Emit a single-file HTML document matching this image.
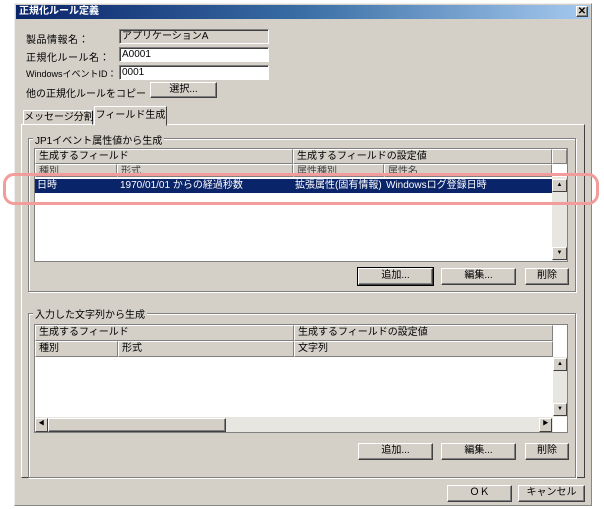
<!DOCTYPE html>
<html><head><meta charset="utf-8"><style>
*{box-sizing:border-box;margin:0;padding:0}
body{width:604px;height:509px;background:#fff;position:relative;overflow:hidden;font-family:"Liberation Sans","Noto Sans CJK JP",sans-serif;font-size:10px;color:#000;white-space:nowrap}
.a{position:absolute}
.dlg{left:14px;top:3px;width:578px;height:503px;background:#d4d0c8;border:1px solid #888;border-top-color:#eee;border-left-color:#eee}
.title{left:16px;top:5px;width:574px;height:14px;background:linear-gradient(90deg,#0a246a,#3a6ea5 50%,#a6caf0);color:#fff;font-weight:bold;padding-left:3px;line-height:14px;font-size:10px}
.in{background:#fff;border:1px solid;border-color:#808080 #fff #fff #808080;box-shadow:inset 1px 1px 0 #404040;padding-left:2px;line-height:13px;font-size:10px}
.btn{background:#d4d0c8;border:1px solid;border-color:#fff #404040 #404040 #fff;box-shadow:inset -1px -1px 0 #808080;text-align:center;font-size:10px;line-height:14px}
.grp{border:1px solid #808080;box-shadow:1px 1px 0 #fff,inset 1px 1px 0 #fff}
.gl{background:#d4d0c8;padding:0 2px;font-size:10px}
.hd{background:#d4d0c8;border:1px solid;border-color:#fff #808080 #808080 #fff;padding-left:3px;font-size:10px;line-height:13px;overflow:hidden;white-space:nowrap}
.sb{background:#e8e6e0}
.arr{background:#d4d0c8;border:1px solid;border-color:#fff #404040 #404040 #fff;font-size:6px;text-align:center;line-height:11px}
.lb{font-size:10px;letter-spacing:0.5px}
</style></head><body>
<div class="a dlg"></div>
<div class="a title">正規化ルール定義</div>
<div class="a btn" style="left:576px;top:6px;width:12px;height:11px;font-size:10px;line-height:9px;font-weight:bold">✕</div>

<div class="a lb" style="left:26px;top:31px">製品情報名：</div>
<div class="a lb" style="left:26px;top:49px">正規化ルール名：</div>
<div class="a" style="left:26px;top:67px;font-size:9px">WindowsイベントID：</div>
<div class="a" style="left:26px;top:85px;font-size:10px">他の正規化ルールをコピー：</div>
<div class="a in" style="left:119px;top:29px;width:150px;height:15px;background:#d4d0c8">アプリケーションA</div>
<div class="a in" style="left:119px;top:47px;width:150px;height:15px">A0001</div>
<div class="a in" style="left:119px;top:65px;width:150px;height:15px">0001</div>
<div class="a btn" style="left:150px;top:82px;width:67px;height:16px">選択...</div>

<div class="a" style="left:21px;top:124px;width:564px;height:354px;border:1px solid;border-color:#fff #404040 #404040 #fff"></div>
<div class="a" style="left:23px;top:110px;width:70px;height:15px;border:1px solid;border-color:#fff #404040 transparent #fff;text-align:center;line-height:13px">メッセージ分割</div>
<div class="a" style="left:94px;top:106px;width:73px;height:20px;border:1px solid;border-color:#fff #404040 transparent #fff;background:#d4d0c8;text-align:center;line-height:17px">フィールド生成</div>

<div class="a grp" style="left:28px;top:138px;width:548px;height:154px"></div>
<div class="a gl" style="left:33px;top:132px">JP1イベント属性値から生成</div>
<div class="a" style="left:34px;top:148px;width:534px;height:114px;background:#fff;border:1px solid #808080"></div>
<div class="a hd" style="left:35px;top:149px;width:258px;height:15px">生成するフィールド</div>
<div class="a hd" style="left:293px;top:149px;width:259px;height:15px">生成するフィールドの設定値</div>
<div class="a hd" style="left:552px;top:149px;width:15px;height:15px"></div>
<div class="a hd" style="left:35px;top:164px;width:82px;height:13px;color:#444">種別</div>
<div class="a hd" style="left:117px;top:164px;width:176px;height:13px;color:#444">形式</div>
<div class="a hd" style="left:293px;top:164px;width:91px;height:13px;color:#444">属性種別</div>
<div class="a hd" style="left:384px;top:164px;width:168px;height:13px;color:#444">属性名</div>
<div class="a" style="left:35px;top:179px;width:517px;height:14px;background:#0a246a;color:#fff;font-size:10px;line-height:14px">
<span class="a" style="left:2px">日時</span><span class="a" style="left:85px">1970/01/01 からの経過秒数</span><span class="a" style="left:260px">拡張属性(固有情報)</span><span class="a" style="left:351px">Windowsログ登録日時</span></div>
<div class="a sb" style="left:552px;top:177px;width:15px;height:84px"></div>
<div class="a arr" style="left:552px;top:179px;width:15px;height:13px">▲</div>
<div class="a arr" style="left:552px;top:247px;width:15px;height:13px">▼</div>
<div class="a btn" style="left:358px;top:268px;width:75px;height:17px;outline:1px solid #000">追加...</div>
<div class="a btn" style="left:441px;top:268px;width:75px;height:17px">編集...</div>
<div class="a btn" style="left:525px;top:268px;width:44px;height:17px">削除</div>

<div class="a grp" style="left:28px;top:313px;width:548px;height:165px"></div>
<div class="a gl" style="left:33px;top:306px">入力した文字列から生成</div>
<div class="a" style="left:34px;top:324px;width:534px;height:109px;background:#fff;border:1px solid #808080"></div>
<div class="a hd" style="left:35px;top:325px;width:259px;height:16px">生成するフィールド</div>
<div class="a hd" style="left:294px;top:325px;width:259px;height:16px">生成するフィールドの設定値</div>
<div class="a hd" style="left:35px;top:341px;width:83px;height:16px">種別</div>
<div class="a hd" style="left:118px;top:341px;width:176px;height:16px">形式</div>
<div class="a hd" style="left:294px;top:341px;width:259px;height:16px">文字列</div>
<div class="a sb" style="left:553px;top:357px;width:14px;height:60px"></div>
<div class="a arr" style="left:553px;top:358px;width:14px;height:13px">▲</div>
<div class="a arr" style="left:553px;top:403px;width:14px;height:13px">▼</div>
<div class="a sb" style="left:35px;top:417px;width:518px;height:15px"></div>
<div class="a arr" style="left:35px;top:418px;width:13px;height:14px">◀</div>
<div class="a btn" style="left:48px;top:418px;width:178px;height:14px"></div>
<div class="a arr" style="left:539px;top:418px;width:13px;height:14px">▶</div>
<div class="a btn" style="left:358px;top:443px;width:75px;height:17px">追加...</div>
<div class="a btn" style="left:441px;top:443px;width:75px;height:17px">編集...</div>
<div class="a btn" style="left:525px;top:443px;width:44px;height:17px">削除</div>

<div class="a btn" style="left:447px;top:485px;width:65px;height:17px">ＯＫ</div>
<div class="a btn" style="left:518px;top:485px;width:67px;height:17px">キャンセル</div>

<div class="a" style="left:3px;top:173px;width:596px;height:32px;border:3px solid #f29c9c;border-radius:11px"></div>
</body></html>
